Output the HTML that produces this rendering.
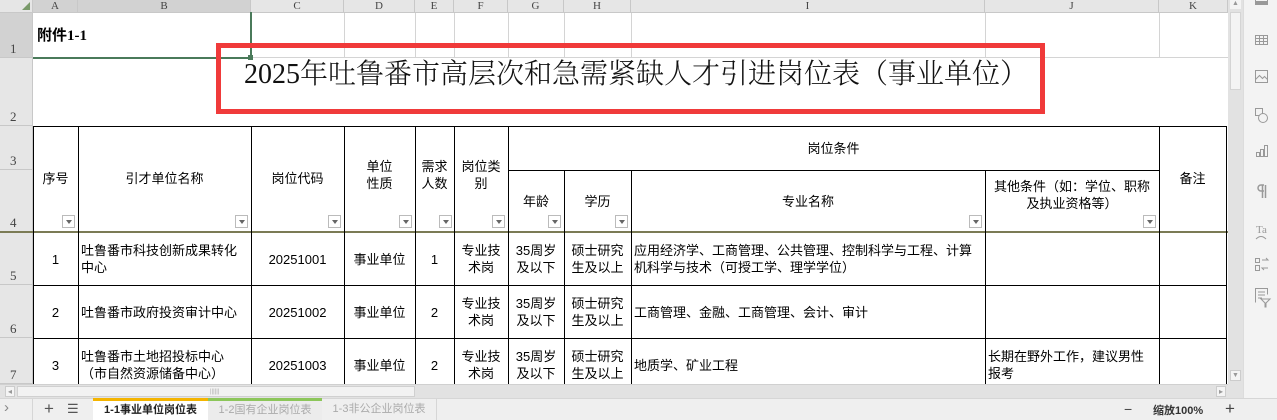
<!DOCTYPE html>
<html><head><meta charset="utf-8"><style>
*{margin:0;padding:0;box-sizing:border-box}
body{width:1277px;height:420px;overflow:hidden;background:#fff;position:relative;font-family:"Liberation Sans","Noto Sans CJK SC",sans-serif;font-size:13px;color:#000}
.a{position:absolute}
.c{position:absolute;display:flex;align-items:center;justify-content:center;text-align:center;line-height:17px}
.l{justify-content:flex-start;text-align:left;padding-left:3px}
.v{position:absolute;width:1px;background:#000}
.h{position:absolute;height:1px;background:#000}
.gv{position:absolute;width:1px;background:#d4d4d4}
.dd{position:absolute;width:13px;height:13px;border:1px solid #bbb;background:#fff;top:215px}
.dd:after{content:"";position:absolute;left:3px;top:4px;border-left:3px solid transparent;border-right:3px solid transparent;border-top:4px solid #666}
.ch{position:absolute;top:0;height:13px;background:#e6e6e6;border-right:1px solid #c8c8c8;border-bottom:1px solid #c8c8c8;font-family:"Liberation Serif",serif;font-size:11px;color:#444;text-align:center;line-height:12px}
.rh{position:absolute;left:0;width:33px;background:#e6e6e6;border-bottom:1px solid #c8c8c8;border-right:1px solid #c8c8c8;font-family:"Liberation Serif",serif;font-size:13px;color:#444;padding-left:10px;display:flex;align-items:flex-end;padding-bottom:0}
</style></head><body>
<div class="ch" style="left:0;width:33px;background:#e6e6e6"></div>
<div class="a" style="left:22px;top:2px;border-left:8px solid transparent;border-bottom:8px solid #7a9a6a"></div>
<div class="ch" style="left:33px;width:45px;background:#d2d2d2">A</div>
<div class="ch" style="left:78px;width:173px;background:#d2d2d2">B</div>
<div class="ch" style="left:251px;width:93px">C</div>
<div class="ch" style="left:344px;width:71px">D</div>
<div class="ch" style="left:415px;width:39px">E</div>
<div class="ch" style="left:454px;width:54px">F</div>
<div class="ch" style="left:508px;width:56px">G</div>
<div class="ch" style="left:564px;width:67px">H</div>
<div class="ch" style="left:631px;width:354px">I</div>
<div class="ch" style="left:985px;width:174px">J</div>
<div class="ch" style="left:1159px;width:69px">K</div>
<div class="rh" style="top:13px;height:45px;background:#d2d2d2">1</div>
<div class="rh" style="top:58px;height:68px">2</div>
<div class="rh" style="top:126px;height:44px">3</div>
<div class="rh" style="top:170px;height:62px">4</div>
<div class="rh" style="top:232px;height:53px">5</div>
<div class="rh" style="top:285px;height:53px">6</div>
<div class="rh" style="top:338px;height:46px;align-items:flex-end">7</div>
<div class="gv" style="left:344px;top:13px;height:45px"></div>
<div class="gv" style="left:415px;top:13px;height:45px"></div>
<div class="gv" style="left:454px;top:13px;height:45px"></div>
<div class="gv" style="left:508px;top:13px;height:45px"></div>
<div class="gv" style="left:564px;top:13px;height:45px"></div>
<div class="gv" style="left:631px;top:13px;height:45px"></div>
<div class="gv" style="left:985px;top:13px;height:45px"></div>
<div class="gv" style="left:1159px;top:13px;height:45px"></div>
<div class="a" style="left:251px;top:57px;width:977px;height:1px;background:#d4d4d4"></div>
<div class="a" style="left:33px;top:12px;width:219px;height:47px;border:2px solid #4a7a5a;border-top:none;border-left:none"></div>
<div class="a" style="left:248px;top:55px;width:5px;height:5px;background:#4a7a5a"></div>
<div class="a" style="left:37px;top:24px;font-weight:bold;font-size:15px;font-family:'Liberation Serif','Noto Sans CJK SC',serif">附件1-1</div>
<div class="a" style="left:216px;top:43px;width:829px;height:71px;border:5px solid #f03a3a"></div>
<div class="a" style="left:231px;top:57px;width:810px;text-align:center;font-size:28px;font-weight:300;font-family:'Liberation Serif','Noto Serif CJK SC',serif;line-height:36px;color:#111">2025年吐鲁番市高层次和急需紧缺人才引进岗位表（事业单位）</div>
<div class="h" style="left:33px;top:126px;width:1194px"></div>
<div class="h" style="left:508px;top:170px;width:651px"></div>
<div class="a" style="left:0;top:231px;width:1228px;height:2px;background:#7b7b55"></div>
<div class="h" style="left:33px;top:285px;width:1194px"></div>
<div class="h" style="left:33px;top:338px;width:1194px"></div>
<div class="v" style="left:33px;top:126px;height:258px"></div>
<div class="v" style="left:78px;top:126px;height:258px"></div>
<div class="v" style="left:251px;top:126px;height:258px"></div>
<div class="v" style="left:344px;top:126px;height:258px"></div>
<div class="v" style="left:415px;top:126px;height:258px"></div>
<div class="v" style="left:454px;top:126px;height:258px"></div>
<div class="v" style="left:508px;top:126px;height:258px"></div>
<div class="v" style="left:564px;top:170px;height:214px"></div>
<div class="v" style="left:631px;top:170px;height:214px"></div>
<div class="v" style="left:985px;top:170px;height:214px"></div>
<div class="v" style="left:1159px;top:126px;height:258px"></div>
<div class="v" style="left:1226px;top:126px;height:258px"></div>
<div class="c" style="left:33px;top:126px;width:45px;height:105px">序号</div>
<div class="c" style="left:78px;top:126px;width:173px;height:105px">引才单位名称</div>
<div class="c" style="left:251px;top:126px;width:93px;height:105px">岗位代码</div>
<div class="c" style="left:344px;top:126px;width:71px;height:98px">单位<br>性质</div>
<div class="c" style="left:415px;top:126px;width:39px;height:98px">需求<br>人数</div>
<div class="c" style="left:454px;top:126px;width:54px;height:98px">岗位类<br>别</div>
<div class="c" style="left:508px;top:126px;width:651px;height:44px">岗位条件</div>
<div class="c" style="left:508px;top:170px;width:56px;height:62px">年龄</div>
<div class="c" style="left:564px;top:170px;width:67px;height:62px">学历</div>
<div class="c" style="left:631px;top:170px;width:354px;height:62px">专业名称</div>
<div class="c" style="left:985px;top:170px;width:174px;height:50px;line-height:17px">其他条件（如：学位、职称<br>及执业资格等）</div>
<div class="c" style="left:1159px;top:126px;width:67px;height:105px">备注</div>
<div class="dd" style="left:62px"></div><div class="dd" style="left:235px"></div><div class="dd" style="left:328px"></div><div class="dd" style="left:399px"></div><div class="dd" style="left:439px"></div><div class="dd" style="left:492px"></div><div class="dd" style="left:548px"></div><div class="dd" style="left:615px"></div><div class="dd" style="left:969px"></div><div class="dd" style="left:1143px"></div>
<div class="c" style="left:33px;top:233px;width:45px;height:52px">1</div>
<div class="c l" style="left:78px;top:233px;width:173px;height:52px">吐鲁番市科技创新成果转化<br>中心</div>
<div class="c" style="left:251px;top:233px;width:93px;height:52px">20251001</div>
<div class="c" style="left:344px;top:233px;width:71px;height:52px">事业单位</div>
<div class="c" style="left:415px;top:233px;width:39px;height:52px">1</div>
<div class="c" style="left:454px;top:233px;width:54px;height:52px">专业技<br>术岗</div>
<div class="c" style="left:508px;top:233px;width:56px;height:52px">35周岁<br>及以下</div>
<div class="c" style="left:564px;top:233px;width:67px;height:52px">硕士研究<br>生及以上</div>
<div class="c l" style="left:631px;top:233px;width:354px;height:52px">应用经济学、工商管理、公共管理、控制科学与工程、计算<br>机科学与技术（可授工学、理学学位）</div>
<div class="c" style="left:33px;top:286px;width:45px;height:52px">2</div>
<div class="c l" style="left:78px;top:286px;width:173px;height:52px">吐鲁番市政府投资审计中心</div>
<div class="c" style="left:251px;top:286px;width:93px;height:52px">20251002</div>
<div class="c" style="left:344px;top:286px;width:71px;height:52px">事业单位</div>
<div class="c" style="left:415px;top:286px;width:39px;height:52px">2</div>
<div class="c" style="left:454px;top:286px;width:54px;height:52px">专业技<br>术岗</div>
<div class="c" style="left:508px;top:286px;width:56px;height:52px">35周岁<br>及以下</div>
<div class="c" style="left:564px;top:286px;width:67px;height:52px">硕士研究<br>生及以上</div>
<div class="c l" style="left:631px;top:286px;width:354px;height:52px">工商管理、金融、工商管理、会计、审计</div>
<div class="c" style="left:33px;top:339px;width:45px;height:52px">3</div>
<div class="c l" style="left:78px;top:339px;width:173px;height:52px">吐鲁番市土地招投标中心<br>（市自然资源储备中心）</div>
<div class="c" style="left:251px;top:339px;width:93px;height:52px">20251003</div>
<div class="c" style="left:344px;top:339px;width:71px;height:52px">事业单位</div>
<div class="c" style="left:415px;top:339px;width:39px;height:52px">2</div>
<div class="c" style="left:454px;top:339px;width:54px;height:52px">专业技<br>术岗</div>
<div class="c" style="left:508px;top:339px;width:56px;height:52px">35周岁<br>及以下</div>
<div class="c" style="left:564px;top:339px;width:67px;height:52px">硕士研究<br>生及以上</div>
<div class="c l" style="left:631px;top:339px;width:354px;height:52px">地质学、矿业工程</div>
<div class="c l" style="left:985px;top:339px;width:174px;height:52px">长期在野外工作，建议男性<br>报考</div>
<div class="a" style="left:0;top:384px;width:1228px;height:14px;background:#e2e2e2;border-top:1px solid #d0d0d0"></div>
<div class="a" style="left:5px;top:386px;width:10px;height:11px;background:#f4f4f4;border:1px solid #ccc;font-size:8px;color:#999;line-height:9px;text-align:center">◂</div>
<div class="a" style="left:17px;top:386px;width:398px;height:11px;background:#f2f2f2;border:1px solid #d0d0d0"></div>
<div class="a" style="left:210px;top:389px;font-size:6px;color:#aaa">||||||</div>
<div class="a" style="left:1216px;top:386px;width:10px;height:11px;background:#f4f4f4;border:1px solid #ccc;font-size:8px;color:#999;line-height:9px;text-align:center">▸</div>
<div class="a" style="left:0;top:398px;width:1277px;height:22px;background:#efefef;border-top:1px solid #d6d6d6"></div>
<div class="a" style="left:4px;top:399px;font-size:15px;color:#888">›</div>
<div class="a" style="left:32px;top:398px;width:1px;height:22px;background:#d6d6d6"></div>
<div class="a" style="left:44px;top:399px;font-size:17px;color:#555;line-height:20px">+</div>
<div class="a" style="left:67px;top:400px;font-size:13px;color:#555;line-height:18px">☰</div>
<div class="a" style="left:93px;top:398px;width:115px;height:22px;background:#fff;border-top:3px solid #f4b400;font-size:11px;text-align:center;line-height:18px;font-weight:bold;color:#222">1-1事业单位岗位表</div>
<div class="a" style="left:208px;top:398px;width:114px;height:22px;background:#ececec;border-top:3px solid #8cc65a;font-size:11px;text-align:center;line-height:18px;color:#aaa">1-2国有企业岗位表</div>
<div class="a" style="left:322px;top:399px;width:115px;height:21px;border-right:1px solid #d6d6d6;font-size:11px;text-align:center;line-height:20px;color:#aaa">1-3非公企业岗位表</div>
<div class="a" style="left:1124px;top:399px;font-size:14px;color:#444;line-height:20px">−</div>
<div class="a" style="left:1153px;top:402px;font-size:11px;color:#333;font-weight:bold">缩放100%</div>
<div class="a" style="left:1225px;top:399px;font-size:17px;color:#444;line-height:20px">+</div>
<div class="a" style="left:1228px;top:0;width:15px;height:398px;background:#e2e2e2"></div>
<div class="a" style="left:1230px;top:0;width:11px;height:9px;background:#f4f4f4;font-size:7px;color:#999;text-align:center;line-height:8px">▲</div>
<div class="a" style="left:1230px;top:12px;width:11px;height:78px;background:#f4f4f4;border:1px solid #d4d4d4"></div>
<div class="a" style="left:1230px;top:370px;width:11px;height:11px;background:#f4f4f4;border:1px solid #ccc;font-size:7px;color:#999;text-align:center;line-height:9px">▼</div>
<div class="a" style="left:1243px;top:0;width:34px;height:398px;background:#f3f3f3;border-left:1px solid #dcdcdc"></div>
<svg class="a" style="left:1243px;top:0" width="34" height="320" viewBox="0 0 34 320" fill="none" stroke="#999" stroke-width="1">
<rect x="12.5" y="-3.5" width="12" height="8"/><rect x="12.5" y="1.5" width="12" height="3" fill="#999"/>
<rect x="12.5" y="35.5" width="12" height="9"/><path d="M12.5 38.5h12M12.5 41.5h12M16.5 35.5v9M20.5 35.5v9"/>
<rect x="12.5" y="70.5" width="12" height="12"/><path d="M12.5 79.5l4-4 3 3 2-2 3 3"/>
<rect x="12.5" y="108.5" width="7" height="7"/><circle cx="20" cy="118" r="4.5" fill="#f3f3f3"/>
<path d="M13.5 156.5v-4h3v4zM17.5 156.5v-7h3v7zM21.5 156.5v-11h3v11z"/>
<path d="M19.5 185v13M22.5 185v13M21 185h-3a3 3 0 0 0 0 6h3" stroke-width="1.5"/>
<text x="13" y="233" font-size="11" fill="#999" stroke="none" font-family="Liberation Serif">Ta</text><path d="M13 239q5-5 10 0"/>
<rect x="12.5" y="258.5" width="4" height="4"/><rect x="12.5" y="265.5" width="4" height="5"/><path d="M19 260h6l-2-2M25 268h-6l2 2"/>
<path d="M12.5 302.5v-14h12v6M15 292h7M15 295h7M15 298h4M18 299h9l-4 4v4h-1v-4z"/>
</svg>
</body></html>
